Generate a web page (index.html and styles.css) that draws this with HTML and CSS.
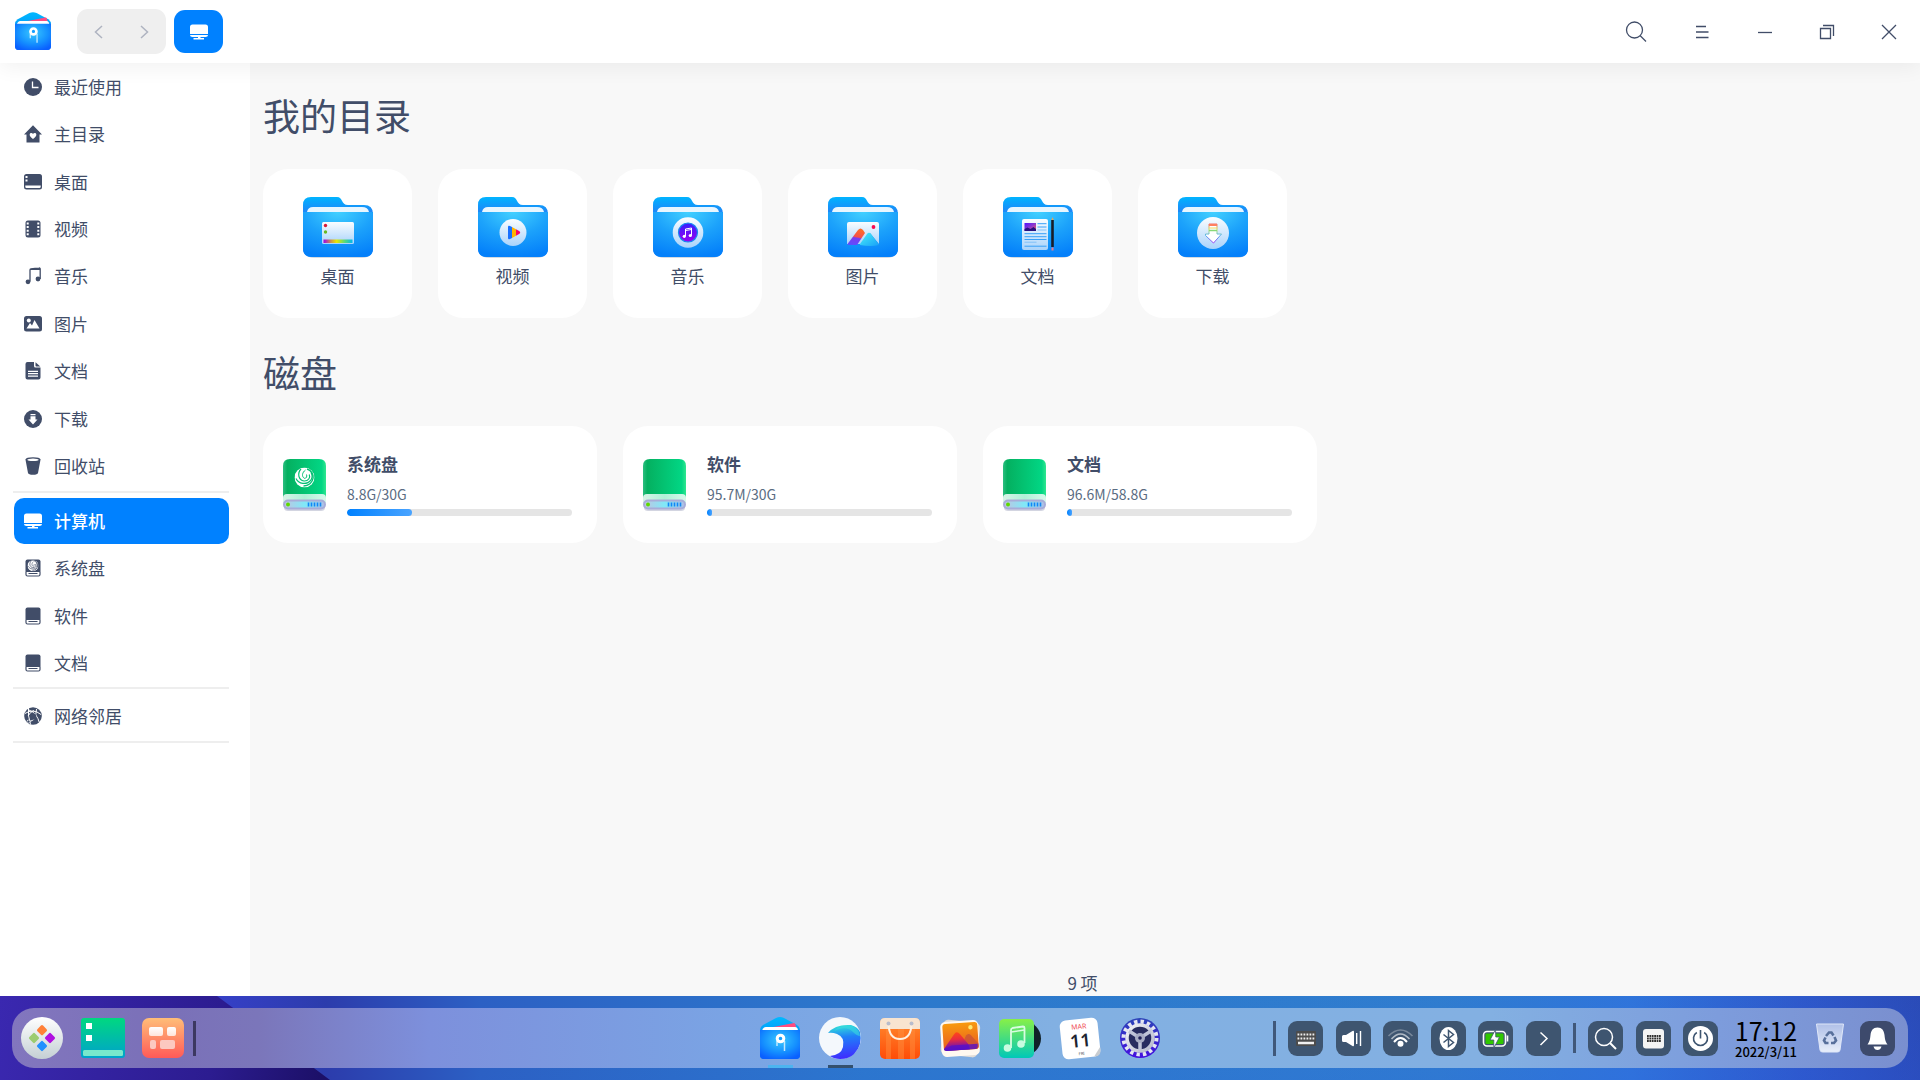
FILE: index.html
```html
<!DOCTYPE html>
<html lang="zh-CN">
<head>
<meta charset="utf-8">
<meta name="viewport" content="width=device-width, initial-scale=1">
<title>计算机</title>
<link rel="stylesheet" href="styles.css">
</head>
<body>
<svg class="sprite" width="0" height="0" aria-hidden="true">
  <defs>
    <linearGradient id="folderBack" x1="0" y1="0" x2="0" y2="1"><stop offset="0" stop-color="#00b4ff"/><stop offset=".25" stop-color="#1f86f8"/></linearGradient>
    <radialGradient id="folderFront" cx=".5" cy="0" r="1"><stop offset="0" stop-color="#42d0ff"/><stop offset=".5" stop-color="#1ca2fb"/><stop offset="1" stop-color="#0480fa"/></radialGradient>
    <linearGradient id="paper" x1="0" y1="0" x2="0" y2="1"><stop offset="0" stop-color="#fafdff"/><stop offset="1" stop-color="#a9d3fb"/></linearGradient>
    <linearGradient id="rainbow"><stop offset="0" stop-color="#a000e8"/><stop offset=".25" stop-color="#d0904a"/><stop offset=".45" stop-color="#e8e800"/><stop offset=".75" stop-color="#50d880"/><stop offset="1" stop-color="#00b8f0"/></linearGradient>
    <linearGradient id="violet" x1="0" y1="0" x2="0" y2="1"><stop offset="0" stop-color="#3420ff"/><stop offset="1" stop-color="#9b00f0"/></linearGradient>
    <linearGradient id="peakRed" x1=".2" y1="0" x2="0" y2="1"><stop offset="0" stop-color="#ff6a28"/><stop offset=".42" stop-color="#f4504c"/><stop offset=".5" stop-color="#7a3cf0"/><stop offset="1" stop-color="#5a50ff"/></linearGradient>
    <linearGradient id="peakCyan" x1="0" y1="0" x2="1" y2="1"><stop offset="0" stop-color="#48f0f8"/><stop offset="1" stop-color="#18a0f8"/></linearGradient>
    <linearGradient id="thumb" x1="0" y1="0" x2="1" y2="1"><stop offset="0" stop-color="#5010ff"/><stop offset=".5" stop-color="#8a3ad0"/><stop offset="1" stop-color="#ff6050"/></linearGradient>
    <linearGradient id="arrowEdge" x1="0" y1="0" x2="0" y2="1"><stop offset="0" stop-color="#f07070"/><stop offset=".3" stop-color="#c8e060"/><stop offset=".6" stop-color="#50b0f0"/><stop offset="1" stop-color="#a040f0"/></linearGradient>
    <linearGradient id="diskTop"><stop offset="0" stop-color="#2cbe80"/><stop offset=".1" stop-color="#04b060"/><stop offset=".9" stop-color="#02d684"/><stop offset="1" stop-color="#30e690"/></linearGradient>
    <linearGradient id="diskMid"><stop offset="0" stop-color="#d8f4e8"/><stop offset=".5" stop-color="#b0f0d8"/><stop offset="1" stop-color="#d8f8ec"/></linearGradient>
    <linearGradient id="diskBase"><stop offset="0" stop-color="#c0c4e0"/><stop offset=".5" stop-color="#80e8f8"/><stop offset="1" stop-color="#b0c0e4"/></linearGradient>
    <linearGradient id="fmBack" x1="0" y1="0" x2="0" y2="1"><stop offset="0" stop-color="#00b8ff"/><stop offset="1" stop-color="#0870f0"/></linearGradient>
    <radialGradient id="fmFront" cx=".5" cy=".35" r=".7"><stop offset="0" stop-color="#38c8ff"/><stop offset=".6" stop-color="#1590ff"/><stop offset="1" stop-color="#0a60ff"/></radialGradient>
    <linearGradient id="silver" x1="0" y1="0" x2="0" y2="1"><stop offset="0" stop-color="#ffffff"/><stop offset="1" stop-color="#c4d0d4"/></linearGradient>
    <linearGradient id="teal" x1="0" y1="0" x2="0" y2="1"><stop offset="0" stop-color="#00d880"/><stop offset="1" stop-color="#00a2cc"/></linearGradient>
    <linearGradient id="coral" x1="0" y1="0" x2="0" y2="1"><stop offset="0" stop-color="#ffbe78"/><stop offset="1" stop-color="#ff5a58"/></linearGradient>
    <linearGradient id="tile" x1="0" y1="0" x2="0" y2="1"><stop offset="0" stop-color="#fff"/><stop offset="1" stop-color="#ffe4da"/></linearGradient>
    <linearGradient id="wave" x1=".5" y1="0" x2=".6" y2="1"><stop offset="0" stop-color="#30e0d8"/><stop offset=".35" stop-color="#2080f8"/><stop offset="1" stop-color="#4028ff"/></linearGradient>
    <linearGradient id="bag" x1="0" y1="0" x2="0" y2="1"><stop offset="0" stop-color="#ff8c30"/><stop offset="1" stop-color="#ff4c08"/></linearGradient>
    <linearGradient id="sunset" x1="0" y1="0" x2="0" y2="1"><stop offset="0" stop-color="#f89a10"/><stop offset="1" stop-color="#e85a20"/></linearGradient>
    <linearGradient id="ridge" x1="0" y1="0" x2="0" y2="1"><stop offset="0" stop-color="#ff4818"/><stop offset=".4" stop-color="#e82c40"/><stop offset="1" stop-color="#4808d8"/></linearGradient>
    <linearGradient id="musicBox" x1="0" y1="0" x2="0" y2="1"><stop offset="0" stop-color="#88f048"/><stop offset="1" stop-color="#00c8b8"/></linearGradient>
    <linearGradient id="gearBack" x1="0" y1="0" x2="0" y2="1"><stop offset="0" stop-color="#2c44b8"/><stop offset="1" stop-color="#4410e0"/></linearGradient>
    <linearGradient id="gearRim" x1="0" y1="0" x2="1" y2="1"><stop offset="0" stop-color="#f4f4f8"/><stop offset="1" stop-color="#b4b8cc"/></linearGradient>
    <linearGradient id="bin" x1="0" y1="0" x2="0" y2="1"><stop offset="0" stop-color="#b0c0e8"/><stop offset="1" stop-color="#e8eefa"/></linearGradient>
  </defs>
  <symbol id="folder" viewBox="0 0 70 62">
    <path d="M3 56h64q-1 5-8 5H11q-7 0-8-5z" fill="#0a3060" opacity=".18"/>
    <path d="M0 8Q0 0 8 0H34C40 0 38 8 45 8H61Q70 8 70 17V51Q70 60 61 60H9Q0 60 0 51z" fill="url(#folderBack)"/>
    <path d="M4 15Q5 10 10 10H59Q65 10 66 15z" fill="#e8f6ff"/>
    <path d="M0 15H70V51Q70 60 61 60H9Q0 60 0 51z" fill="url(#folderFront)"/>
  </symbol>
  <symbol id="disk" viewBox="0 0 43 52">
    <rect x="1" y="45" width="41" height="7" rx="4" fill="#8088a8" opacity=".35"/>
    <path d="M0 42V7Q0 0 7 0H36Q43 0 43 7V42z" fill="url(#diskTop)"/>
    <path d="M0 44V39Q0 35 4 35H39Q43 35 43 39V44z" fill="url(#diskMid)"/>
    <rect x="1" y="41.500" width="41" height="8" rx="4" fill="url(#diskBase)" stroke="#a8acd8" stroke-width="2"/>
    <circle cx="5" cy="45.500" r="2" fill="#60d800"/>
    <path d="M25.500 43.500v4M28.500 43.500v4M31.500 43.500v4M34.500 43.500v4M37.500 43.500v4" stroke="#1088f8" stroke-width="1.600"/>
  </symbol>
  <symbol id="swirl" viewBox="0 0 20 20">
    <circle cx="10" cy="10" r="10" fill="#fff"/>
    <g class="swirl-gap" fill="none">
      <path d="M6.500 1.500C2.500 6 4 12.500 9.500 13.500C14 13.800 16 10 14.800 7" stroke-width="1.200"/>
      <path d="M11 2.500C7.500 5 7 9 9.800 10.800C12 11 12.800 9 12 7" stroke-width="1"/>
      <path d="M1.500 11C4 16.500 12 18 16.500 12.500C18 10 18 7.500 16.500 5" stroke-width="1.200"/>
      <path d="M12.500 1.500C16.500 3 18.800 6.500 18.600 10.500C18 15 14 18.500 9 18.500" stroke-width="1.400"/>
    </g>
  </symbol>
  <symbol id="filemanager" viewBox="0 0 40 42">
    <path d="M0 14Q0 10 3 8L16 1Q20-.8 24 1L37 8Q40 10 40 14V38Q40 42 36 42H4Q0 42 0 38z" fill="url(#fmBack)"/>
    <path d="M3 12L34 6Q36 6 36 12z" fill="#ff4c80"/>
    <path d="M2 14Q3 10 6 10H35Q38 10 38 14z" fill="#fff"/>
    <path d="M0 13H40V38Q40 42 36 42H4Q0 42 0 38z" fill="url(#fmFront)"/>
    <path d="M17 24v5M24.500 24v10" stroke="#bfe8ff" stroke-width="1.500"/>
    <circle cx="20.500" cy="21.500" r="3.300" fill="#18a0ff" stroke="#fff" stroke-width="3"/>
  </symbol>
  <symbol id="computer" viewBox="0 0 18 18">
    <path d="M2.500 1.500h13q2.500 0 2.500 2.500v7H0V4q0-2.500 2.500-2.500zM0 12h18q0 2-2.500 2h-5v1h3.500v1.500H3.500V15H8v-1H2.500Q0 14 0 12z" fill="currentColor"/>
  </symbol>
  <symbol id="drive" viewBox="0 0 18 18">
    <path d="M1.500 13V2.500Q1.500.5 3.500.5h11q2 0 2 2V13z" fill="currentColor"/>
    <path d="M2 13v2.500q0 1.500 1.500 1.500h11q1.500 0 1.500-1.500V13M4.500 14.500h9" fill="none" stroke="currentColor" stroke-width="1.200"/>
  </symbol>
</svg>

<header class="titlebar">
  <svg class="app-logo" aria-hidden="true"><use href="#filemanager"/></svg>
  <div class="history">
    <button type="button" aria-label="后退"><svg width="9" height="14" viewBox="0 0 9 14"><path d="M8 1L1.500 7L8 13"/></svg></button>
    <button type="button" aria-label="前进"><svg width="9" height="14" viewBox="0 0 9 14"><path d="M1 1L7.500 7L1 13"/></svg></button>
  </div>
  <button class="location" type="button" aria-label="计算机"><svg width="18" height="18"><use href="#computer"/></svg></button>
  <div class="window-tools">
    <button type="button" aria-label="搜索"><svg width="22" height="22" viewBox="0 0 22 22"><circle cx="9.500" cy="9" r="8"/><path d="M15 14.500L21 20.500"/></svg></button>
    <button type="button" aria-label="菜单"><svg width="14" height="14" viewBox="0 0 14 14"><path d="M0 1.500h10M0 7h12.500M0 12.500h12.500"/></svg></button>
    <button type="button" aria-label="最小化"><svg width="14" height="14" viewBox="0 0 14 14"><path d="M0 7.500h14"/></svg></button>
    <button type="button" aria-label="还原"><svg width="16" height="16" viewBox="0 0 16 16"><path d="M1.500 4.500h10v10h-10zM4 1.500h10.500V12"/></svg></button>
    <button type="button" aria-label="关闭"><svg width="16" height="16" viewBox="0 0 16 16"><path d="M1 1L15 15M15 1L1 15"/></svg></button>
  </div>
</header>

<div class="workspace">
  <nav class="sidebar" aria-label="位置">
    <ul class="places places-user">
      <li><a href="#recent"><svg viewBox="0 0 18 18"><circle cx="9" cy="9" r="9" fill="currentColor"/><path d="M8.500 3.500v6h6" fill="none" stroke="#fff" stroke-width="1.300"/></svg>最近使用</a></li>
      <li><a href="#home"><svg viewBox="0 0 18 18"><path d="M9 .3L18 9.500h-2.500V17.500h-13V9.500H0z" fill="currentColor"/><path d="M9 14C6 12 5.500 10.500 5.700 9.300C6 7.600 8.300 7.500 9 9C9.700 7.500 12 7.600 12.300 9.300C12.500 10.500 12 12 9 14z" fill="#fff"/></svg>主目录</a></li>
      <li><a href="#desktop"><svg viewBox="0 0 18 18"><rect x="0" y="1" width="18" height="15.500" rx="2.500" fill="currentColor"/><path d="M1.500 3h2v2h-2zM1.500 6.500h2v2h-2zM1.300 12.500h15.400v1.300q0 1.200-1.200 1.200h-13q-1.200 0-1.200-1.200z" fill="#fff"/></svg>桌面</a></li>
      <li><a href="#videos"><svg viewBox="0 0 18 18"><rect x="1.500" y=".5" width="15" height="17" rx="2.500" fill="currentColor"/><path d="M2.700 2.500h2v2h-2zM2.700 6h2v2h-2zM2.700 9.700h2v2h-2zM2.700 13.300h2v2h-2zM13.300 2.500h2v2h-2zM13.300 6h2v2h-2zM13.300 9.700h2v2h-2zM13.300 13.300h2v2h-2z" fill="#fff"/></svg>视频</a></li>
      <li><a href="#music"><svg viewBox="0 0 18 18"><path d="M6 14.500V3Q6 2 7 1.800L15 1q1.200-.2 1.200 1V12" fill="none" stroke="currentColor" stroke-width="1.300"/><path d="M6 2L16 1v2L6 3z" fill="currentColor"/><circle cx="4" cy="14.800" r="2.400" fill="currentColor"/><circle cx="14" cy="12" r="2.400" fill="currentColor"/></svg>音乐</a></li>
      <li><a href="#pictures"><svg viewBox="0 0 18 18"><rect x="0" y="1" width="18" height="15.500" rx="2.500" fill="currentColor"/><circle cx="4.800" cy="5.500" r="2" fill="#fff"/><path d="M2.500 13.500L6 8l2 2.500L10.500 5l5 8.500z" fill="#fff"/></svg>图片</a></li>
      <li><a href="#documents"><svg viewBox="0 0 18 18"><path d="M3.500 0H10v4q0 1.500 1.500 1.500h5V15.500q0 2-2 2h-11q-2 0-2-2V2Q1.500 0 3.500 0z" fill="currentColor"/><path d="M11.500.3L16.300 4.500h-4q-.8 0-.8-.8z" fill="currentColor"/><path d="M4 9.300h10M4 11.700h10M4 14.200h10" stroke="#fff" stroke-width="1.200"/></svg>文档</a></li>
      <li><a href="#downloads"><svg viewBox="0 0 18 18"><circle cx="9" cy="9" r="9" fill="currentColor"/><path d="M6.500 4h5v1.300h-5zM6.500 6.300h5V9.500h2L9 14.500L4.500 9.500h2z" fill="#fff"/></svg>下载</a></li>
      <li><a href="#trash"><svg viewBox="0 0 18 18"><path d="M1.500 2.500Q2 .2 9 .2T16.500 2.500L14 16q-.5 1.800-5 1.800T4 16z" fill="currentColor"/><ellipse cx="9" cy="2.800" rx="5.800" ry="1.300" fill="#fff"/></svg>回收站</a></li>
    </ul>
    <ul class="places places-disk">
      <li><a class="current" href="#computer-view" aria-current="page"><svg><use href="#computer"/></svg>计算机</a></li>
      <li><a href="#disk-system"><svg viewBox="0 0 18 18"><path d="M1.500 13V2.500Q1.500.5 3.500.5h11q2 0 2 2V13z" fill="currentColor"/><path d="M2 13v2.500q0 1.500 1.500 1.500h11q1.500 0 1.500-1.500V13M4.500 14.500h9" fill="none" stroke="currentColor" stroke-width="1.200"/><use href="#swirl" x="3.500" y="1.200" width="11" height="11"/></svg>系统盘</a></li>
      <li><a href="#disk-software"><svg><use href="#drive"/></svg>软件</a></li>
      <li><a href="#disk-documents"><svg><use href="#drive"/></svg>文档</a></li>
    </ul>
    <ul class="places places-network">
      <li><a href="#network"><svg viewBox="0 0 18 18"><circle cx="9" cy="9" r="8.800" fill="currentColor"/><path d="M4.500 0Q3.500 8 6.500 17.500M1 6.500Q9 1 17 7.500M3 13.500Q12 17 12.500 2M5 3Q13 6 15.500 16M4 9Q6 5 10 3.500" fill="none" stroke="#fff" stroke-width="1"/><circle cx="9" cy="9.500" r="3.200" fill="currentColor"/><circle cx="4.500" cy="14.500" r="1.500" fill="currentColor" stroke="#fff" stroke-width=".6"/></svg>网络邻居</a></li>
    </ul>
  </nav>

  <main class="content" id="computer-view">
    <section>
      <h2>我的目录</h2>
      <div class="folders">
        <a class="folder" href="#desktop"><svg viewBox="0 0 70 60"><use href="#folder" width="70" height="62"/><rect x="19" y="25" width="32" height="22" rx="1.500" fill="url(#paper)"/><rect x="20.500" y="42.500" width="29" height="3.500" fill="url(#rainbow)"/><circle cx="22.500" cy="28.500" r="1.700" fill="#d81838"/><circle cx="22.500" cy="35" r="1.700" fill="#6ab820"/></svg><span>桌面</span></a>
        <a class="folder" href="#videos"><svg viewBox="0 0 70 60"><use href="#folder" width="70" height="62"/><circle cx="35" cy="35.500" r="13.500" fill="url(#paper)"/><path d="M30 30q0-2 2-1l2 1v11l-2 1q-2 1-2-1z" fill="#1870ff"/><path d="M34 30l4 2.300v6.400L34 41z" fill="#ffb400"/><path d="M38 32.300l3.500 2q1.500 1.200 0 2.400l-3.500 2z" fill="#f80868"/></svg><span>视频</span></a>
        <a class="folder" href="#music"><svg viewBox="0 0 70 60"><use href="#folder" width="70" height="62"/><circle cx="35" cy="35.500" r="15.300" fill="url(#paper)"/><circle cx="35" cy="35.500" r="9.500" fill="url(#violet)" stroke="#1888f0" stroke-width="1.200"/><path d="M32.500 39v-7l6-1v7.500M32.500 33.500l6-1" fill="none" stroke="#fff" stroke-width="1"/><circle cx="31.300" cy="39.300" r="1.600" fill="#fff"/><circle cx="37.300" cy="38.500" r="1.600" fill="#fff"/></svg><span>音乐</span></a>
        <a class="folder" href="#pictures"><svg viewBox="0 0 70 60"><use href="#folder" width="70" height="62"/><path d="M19 27q0-2 2-2h28q2 0 2 2v20L42 36l-7 11H19z" fill="url(#paper)"/><path d="M32 47L39 37q2-2.500 4 0l8 11q-8 2-19 0z" fill="url(#peakCyan)"/><path d="M19.500 47L30 33q2.500-3 5 0l2 3L29 48H21q-2 0-1.500-1z" fill="url(#peakRed)"/><circle cx="45.500" cy="30" r="1.900" fill="#f80850"/></svg><span>图片</span></a>
        <a class="folder" href="#documents"><svg viewBox="0 0 70 60"><use href="#folder" width="70" height="62"/><rect x="19" y="22" width="26" height="31" rx="2" fill="url(#paper)"/><rect x="21.500" y="26" width="11.500" height="8" fill="url(#thumb)"/><path d="M21.500 34v-2l3-1.500 3 1.500 3-2 2.500 2v2z" fill="#281080"/><path d="M34.500 26.700h9M34.500 30h9M21.500 36.700h22M21.500 39.700h22M21.500 42.500h22M21.500 49.200h22" stroke="#38a0f8"/><path d="M34.500 33h9M21.500 45.200h12" stroke="#80c0f8"/><path d="M49.500 23v27" stroke="#181c28" stroke-width="2.600"/><path d="M48.300 23L49.500 20l1.300 3z" fill="#d8a860"/><path d="M49.500 50.500v3" stroke="#f07888" stroke-width="2"/></svg><span>文档</span></a>
        <a class="folder" href="#downloads"><svg viewBox="0 0 70 60"><use href="#folder" width="70" height="62"/><circle cx="35" cy="36" r="16" fill="url(#paper)"/><path d="M31 27h8v10h4.500L35.500 46L27.500 38.500V37H31z" fill="#fff" stroke="url(#arrowEdge)"/><path d="M31 28h8" stroke="#ff8060" stroke-width="2"/><path d="M31 31h8" stroke="#f0d860" stroke-width="1"/><path d="M31 33.500h8" stroke="#88d878" stroke-width="1.500"/></svg><span>下载</span></a>
      </div>
    </section>
    <section>
      <h2>磁盘</h2>
      <div class="disks">
        <a class="disk" href="#disk-system">
          <svg viewBox="0 0 43 52"><use href="#disk" width="43" height="52"/><use class="swirl-green" href="#swirl" x="11.500" y="8.500" width="20" height="20"/></svg>
          <div class="disk-info"><h3>系统盘</h3><p>8.8G/30G</p><div class="meter"><div style="width:29%"></div></div></div>
        </a>
        <a class="disk" href="#disk-software">
          <svg viewBox="0 0 43 52"><use href="#disk" width="43" height="52"/></svg>
          <div class="disk-info"><h3>软件</h3><p>95.7M/30G</p><div class="meter"><div style="width:2%"></div></div></div>
        </a>
        <a class="disk" href="#disk-documents">
          <svg viewBox="0 0 43 52"><use href="#disk" width="43" height="52"/></svg>
          <div class="disk-info"><h3>文档</h3><p>96.6M/58.8G</p><div class="meter"><div style="width:2%"></div></div></div>
        </a>
      </div>
    </section>
    <p class="status">9 项</p>
  </main>
</div>

<footer class="taskbar">
  <div class="dock">
    <div class="dock-start">
      <div class="launchers">
        <button type="button" aria-label="启动器"><svg viewBox="0 0 42 42"><circle cx="21" cy="21" r="21" fill="url(#silver)"/><g><rect x="17" y="9.200" width="8" height="8" rx="1.500" transform="rotate(45 21 13.200)" fill="#ff8038"/><rect x="9" y="17" width="8" height="8" rx="1.500" transform="rotate(45 13 21)" fill="#9ccc70"/><rect x="25" y="17" width="8" height="8" rx="1.500" transform="rotate(45 29 21)" fill="#b010e0"/><rect x="17" y="25" width="8" height="8" rx="1.500" transform="rotate(45 21 29)" fill="#2090ff"/></g></svg></button>
        <button type="button" aria-label="显示桌面"><svg viewBox="0 0 42 42"><rect y="1" width="44" height="40" rx="3" fill="url(#teal)"/><path d="M5 6h6v6H5zM5 18h6v6H5z" fill="#fff"/><rect x="2" y="33" width="40" height="6" rx="1.500" fill="#78e8cc"/></svg></button>
        <button type="button" aria-label="多任务视图"><svg viewBox="0 0 42 42"><rect x="1" y="1" width="42" height="40" rx="7" fill="url(#coral)"/><rect x="8" y="10" width="14" height="9" rx="2" fill="url(#tile)"/><rect x="26" y="10" width="9" height="9" rx="2" fill="url(#tile)"/><rect x="9" y="23" width="6" height="9" rx="2" fill="#fcc8c0"/><rect x="19" y="23" width="15" height="9" rx="2" fill="#fcc8c0"/></svg></button>
      </div>
      <span class="divider divider-tall"></span>
    </div>

    <div class="apps">
      <button class="running active" type="button" aria-label="文件管理器"><svg viewBox="-1 0 42 42"><use href="#filemanager" width="40" height="42"/></svg></button>
      <button class="running" type="button" aria-label="浏览器"><svg viewBox="0 0 42 42"><circle cx="21" cy="21" r="21" fill="#f4f8fc"/><path d="M9 16Q16 7 32 8Q39 10 41 15Q44 28 35 37Q30 42 21 42Q15 42 11 39Q22 38 24 30Q26 20 18 17Q13 15 9 16z" fill="url(#wave)"/><path d="M15 14Q27 8 34 15Q38 19 41 19Q40 12 33 9Q22 7 15 14z" fill="#38d8e0" opacity=".6"/></svg></button>
      <button type="button" aria-label="应用商店"><svg viewBox="0 0 42 42"><rect x="1" y="1" width="40" height="41" rx="5" fill="url(#bag)"/><path d="M7 12h5v30H7zM19 12h6v30h-6zM31 12h5v30h-5z" fill="#ff9040" opacity=".45"/><path d="M1 12V6Q1 1 6 1H36Q41 1 41 6V12z" fill="#f8e4d0"/><path d="M9.500 7Q10 22 21 22T32.500 7" fill="none" stroke="#fff0e0" stroke-width="2"/><circle cx="9.500" cy="6.500" r="2" fill="#b8bccc"/><circle cx="32.500" cy="6.500" r="2" fill="#b8bccc"/></svg></button>
      <button type="button" aria-label="相册"><svg viewBox="0 0 42 42"><rect x="3" y="4" width="37" height="35" rx="5" transform="rotate(6 21 21)" fill="#e0dcd8"/><rect x="2" y="4" width="38" height="35" rx="5" transform="rotate(-4 21 21)" fill="#fff8f0"/><g transform="rotate(-4 21 19)"><rect x="4" y="6" width="35" height="27" rx="3" fill="url(#sunset)"/><path d="M20 33L27 19q2.500-3 5 0l7 9v2q0 3-3 3z" fill="#c85038" opacity=".75"/><path d="M4 31L15 17q3-4 6 0l8 11 1 5H7q-3 0-3-2z" fill="url(#ridge)"/><path d="M5 31L12 28H38v2q0 3-3 3H8z" fill="#5810c8" opacity=".8"/><circle cx="32" cy="11" r="2.200" fill="#ffe870"/></g></svg></button>
      <button type="button" aria-label="音乐"><svg viewBox="0 0 42 42"><circle cx="25" cy="21.500" r="17" fill="#102028"/><rect x="0" y="2" width="35" height="39" rx="5" fill="url(#musicBox)"/><path d="M12 31V13q0-1.500 1.500-2L24 9.500q1.500 0 1.500 1.500V26" fill="none" stroke="#d8fce0" stroke-width="1.800"/><path d="M12 15l13.500-2" stroke="#d8fce0" stroke-width="1.500"/><circle cx="8.500" cy="31" r="3.800" fill="#c8fce0"/><circle cx="22" cy="27" r="3.800" fill="#c8fce0"/></svg></button>
      <button type="button" aria-label="日历"><svg viewBox="0 0 42 42"><g transform="rotate(-6 21 21)"><rect x="2" y="2" width="38" height="39" rx="6" fill="#fff"/><path d="M40 32L33 41h1q6 0 6-6z" fill="#c8ccd0"/><text class="cal-month" x="21" y="12">MAR</text><text class="cal-day" x="21" y="30">11</text><text class="cal-week" x="21" y="38">FRI</text></g></svg></button>
      <button type="button" aria-label="控制中心"><svg viewBox="0 0 42 42"><circle cx="21" cy="21" r="20" fill="url(#gearBack)"/><circle cx="21" cy="21" r="16.500" fill="none" stroke="#e4e6f2" stroke-width="4" stroke-dasharray="3.400 3.080"/><circle cx="21" cy="21" r="13" fill="#282c60" stroke="url(#gearRim)" stroke-width="3.500"/><path d="M21 22V35M21 21L10 14M21 21L32 14" stroke="#c0c4d8" stroke-width="3.500"/><circle cx="21" cy="21" r="5" fill="#a8acc4"/><circle cx="21" cy="21" r="1.800" fill="#202058"/></svg></button>
    </div>

    <div class="dock-end">
      <div class="tray">
        <span class="divider divider-tall"></span>
        <div class="tray-group tray-system">
          <button type="button" aria-label="输入法"><svg viewBox="0 0 35 35"><rect x="8" y="10" width="20" height="15" rx="1" fill="#4c4c4c"/><path d="M9.500 13.500h17M9.500 17.500h17" stroke="#eee" stroke-width="2" stroke-dasharray="1.800 1.200"/><path d="M10 22h16" stroke="#f0f0f0" stroke-width="2.500"/></svg></button>
          <button type="button" aria-label="音量"><svg viewBox="0 0 35 35"><path d="M6 15.500q0-1.500 1.500-1.500H10l6.500-4q1.500-.8 1.500 1V24q0 1.800-1.500 1L10 21H7.500Q6 21 6 19.500z" fill="#fff"/><path d="M20.700 12v11M24.500 10v15" stroke="#fff" stroke-width="1.400"/></svg></button>
          <button type="button" aria-label="无线网络"><svg viewBox="0 0 35 35"><g fill="none" stroke="#fff" stroke-width="1.600"><path d="M11 21Q17.500 13 24 21" stroke-width="2"/><path d="M8.500 18Q17.500 8 26.500 18" opacity=".6"/><path d="M5.500 15Q17.500 3 29.500 15" opacity=".3"/></g><circle cx="17.500" cy="22.800" r="3" fill="#fff"/></svg></button>
          <button type="button" aria-label="蓝牙"><svg viewBox="0 0 35 35"><ellipse cx="17.500" cy="17.500" rx="9" ry="11.500" fill="#fff"/><path d="M12.500 13.500L22.500 21.500L17.500 25.500V9.500L22.500 13.500L12.500 21.500" fill="none" stroke="#3e5570" stroke-width="1.500"/></svg></button>
          <button type="button" aria-label="电池"><svg viewBox="0 0 35 35"><rect x="5.500" y="10.500" width="22" height="14.500" rx="3.500" fill="none" stroke="#fff" stroke-width="1.600"/><rect x="7.500" y="12.500" width="18" height="10.500" rx="1" fill="#30c800"/><path d="M29.500 14.500v6" stroke="#fff" stroke-width="1.600"/><path d="M17.500 8.500L12 19h3.800v8L21.500 16h-3.700z" fill="#fff" stroke="#3e5570" stroke-width=".8"/></svg></button>
          <button type="button" aria-label="展开托盘"><svg viewBox="0 0 35 35"><path d="M14.500 11.500L21 17.500L14.500 24" fill="none" stroke="#fff" stroke-width="1.500"/></svg></button>
        </div>
        <span class="divider"></span>
        <div class="tray-group tray-tools">
          <button type="button" aria-label="全局搜索"><svg viewBox="0 0 35 35"><circle cx="16" cy="16" r="8.500" fill="none" stroke="#fff" stroke-width="1.500"/><path d="M22 22L28 28" stroke="#fff" stroke-width="2"/></svg></button>
          <button type="button" aria-label="屏幕键盘"><svg viewBox="0 0 35 35"><rect x="7" y="8" width="21" height="19.500" rx="3" fill="#f4f4f4"/><path d="M11 15h14M11 17.500h14M11 20h14" stroke="#303030" stroke-width="1.800" stroke-dasharray="1.800 .6"/></svg></button>
          <button type="button" aria-label="电源"><svg viewBox="0 0 35 35"><circle cx="17.500" cy="17.500" r="12.500" fill="#fff"/><path d="M13.800 11.500A7 7 0 1 0 21.200 11.500M17.500 9v8.500" fill="none" stroke="#3e5570" stroke-width="1.600"/></svg></button>
        </div>
      </div>
      <div class="clock"><time class="clock-time" datetime="17:12">17:12</time><time class="clock-date" datetime="2022-03-11">2022/3/11</time></div>
      <button class="bin" type="button" aria-label="回收站"><svg viewBox="0 0 28 30"><path d="M.5 1H27.500L24 27q-.3 2-2.500 2h-15q-2.200 0-2.500-2z" fill="url(#bin)" stroke="#dfe7f8"/><g fill="none" stroke="#58709c" stroke-width="2.600"><path d="M10 13L13 9.500H15.500L17.500 12.500M18.500 14L20 17.500L18 20H15M12.500 20H9.500L8 17.500L9.500 14.500"/></g></svg></button>
      <div class="tray-group"><button type="button" aria-label="通知"><svg viewBox="0 0 35 35"><path d="M17.500 6.500C22 6.500 24 9.500 24.500 14C25 19 25.500 20.500 27.500 23.500H7.500C9.500 20.500 10 19 10.500 14C11 9.500 13 6.500 17.500 6.500zM13.500 25.500h8Q20.500 29 17.500 29T13.500 25.500z" fill="#fff"/></svg></button></div>
    </div>
  </div>
</footer>
</body>
</html>
```
FILE: styles.css
```css
:root {
  --ink: #414d68;
  --accent: #0081ff;
  --surface: #ffffff;
  --canvas: #f8f8f8;
  --line: #eeeeee;
  --swirl-gap: #414d68;
}

* {
  box-sizing: border-box;
}

body {
  display: flex;
  flex-direction: column;
  min-height: 100vh;
  margin: 0;
  background: var(--canvas);
  color: var(--ink);
  font-family: "Noto Sans CJK SC", "Noto Sans", sans-serif;
  font-size: 17px;
  line-height: 26px;
}

.sprite {
  position: absolute;
}

h2,
h3,
p,
ul {
  margin: 0;
  padding: 0;
}

ul {
  list-style: none;
}

a {
  color: inherit;
  text-decoration: none;
}

svg {
  display: block;
}

button {
  display: flex;
  align-items: center;
  justify-content: center;
  padding: 0;
  border: 0;
  background: none;
  color: inherit;
  font: inherit;
}

/* Title bar */

.titlebar {
  position: relative;
  z-index: 1;
  display: flex;
  align-items: center;
  height: 63px;
  padding-left: 15px;
  background: var(--surface);
  box-shadow: 0 4px 20px rgba(0, 0, 0, 0.06);
}

.app-logo {
  width: 36px;
  height: 38px;
  margin: 0 26px 2px 0;
}

.history {
  display: flex;
  gap: 4px;
  width: 89px;
  height: 45px;
  margin-right: 8px;
  padding-right: 1px;
  border-radius: 11px;
  background: #efefef;
}

.history button {
  flex: 1;
}

.history svg {
  fill: none;
  stroke: #aeb3c0;
  stroke-width: 1.5;
}

.location {
  width: 49px;
  height: 43px;
  border-radius: 11px;
  background: var(--accent);
  color: #fff;
}

.window-tools {
  display: flex;
  align-self: stretch;
  margin-left: auto;
}

.window-tools button {
  width: 62px;
}

.window-tools button:first-child {
  width: 72px;
}

.window-tools svg {
  fill: none;
  stroke: var(--ink);
  stroke-width: 1.3;
}

/* Sidebar */

.workspace {
  display: flex;
  flex: 1;
}

.sidebar {
  flex: none;
  width: 250px;
  padding: 0 21px 0 13px;
  background: var(--surface);
}

.places {
  display: flex;
  flex-direction: column;
  border-bottom: 2px solid var(--line);
}

.places-user {
  min-height: 430px;
  padding-bottom: 1px;
}

.places-disk {
  min-height: 196px;
  padding-top: 4px;
}

.places-network {
  min-height: 54px;
  padding: 3px 0 1px;
}

.places li {
  display: flex;
  flex: 1;
  padding: 1px 0 1px 1px;
}

.places a {
  display: flex;
  flex: 1;
  align-items: center;
  gap: 12px;
  padding-left: 10px;
  border-radius: 10px;
}

.places svg {
  width: 18px;
  height: 18px;
}

.places .current {
  background: var(--accent);
  color: #fff;
  font-weight: 500;
}

.swirl-gap {
  stroke: var(--swirl-gap);
}

.swirl-green {
  --swirl-gap: #04c074;
}

/* Content */

.content {
  display: flex;
  flex: 1;
  flex-direction: column;
  gap: 27px;
  padding: 25px 18px 0 13px;
}

h2 {
  margin-bottom: 27px;
  font-size: 37px;
  font-weight: 400;
  line-height: 54px;
}

.folders,
.disks {
  display: flex;
  flex-wrap: wrap;
  gap: 26px;
}

.folder {
  display: flex;
  flex-direction: column;
  align-items: center;
  gap: 6px;
  width: 149px;
  padding: 28px 0 29px;
  border-radius: 25px;
  background: var(--surface);
}

.folder svg {
  width: 70px;
  height: 60px;
  overflow: visible;
}

.disk {
  display: flex;
  align-items: center;
  gap: 21px;
  width: 334px;
  padding: 25px 25px 27px 20px;
  border-radius: 25px;
  background: var(--surface);
}

.disk > svg {
  flex: none;
  width: 43px;
  height: 52px;
  margin-top: 3px;
}

.disk-info {
  flex: 1;
}

h3 {
  font-size: 17px;
  font-weight: 700;
}

.disk p {
  margin: 7px 0 5px;
  color: #5a6c82;
  font-size: 14px;
  line-height: 20px;
}

.meter {
  height: 7px;
  overflow: hidden;
  border-radius: 4px;
  background: #e5e5e5;
}

.meter div {
  height: 100%;
  border-radius: 4px;
  background: linear-gradient(90deg, #0081ff, #4aa4ff);
}

.status {
  margin-top: auto;
  text-align: center;
}

/* Taskbar */

.taskbar {
  position: relative;
  padding: 12px;
  background: linear-gradient(172deg, transparent 40%, rgba(44, 90, 235, 0.3)),
    linear-gradient(90deg, #3640c8 11%, #2c3cac 17%, #2c60c4 25%, #2c78cc 45%, #3080cc 75%, #3078d8 85%, #2e58c4 94%, #2a48ac 100%);
}

.taskbar::before {
  content: "";
  position: absolute;
  inset: 0;
  background: linear-gradient(100deg, #3a28b0, #2c1c90 220px, #1c1068 330px);
  clip-path: polygon(0 0, 217px 0, 330px 100%, 0 100%);
}

.dock {
  position: relative;
  display: grid;
  grid-template-columns: 1fr auto 1fr;
  align-items: center;
  height: 60px;
  border-radius: 22px;
  background: linear-gradient(90deg, #8276be 0%, #7a70b8 8%, #7b76ba 13%, #7d90dc 22%, #7aa4e4 38%, #82b0e2 55%, #83b0e2 78%, #7d9cdc 90%, #7a8fcf 100%);
}

.dock-start,
.dock-end,
.tray,
.apps,
.launchers {
  display: flex;
  align-items: center;
}

.dock-start {
  gap: 10px;
  padding-left: 9px;
}

.launchers {
  gap: 18px;
}

.launchers svg,
.apps svg {
  width: 42px;
  height: 42px;
  overflow: visible;
}

.divider {
  width: 3px;
  height: 30px;
  background: #40587a;
}

.divider-tall {
  height: 35px;
}

.dock-start .divider {
  background: #3c3860;
}

.apps {
  gap: 18px;
}

.apps button {
  position: relative;
}

.running::after {
  content: "";
  position: absolute;
  bottom: -9px;
  width: 25px;
  height: 3px;
  background: #34506e;
}

.running.active::after {
  background: #4cb4f0;
}

.cal-month,
.cal-day,
.cal-week {
  font-family: "Noto Sans", sans-serif;
  text-anchor: middle;
}

.cal-month {
  fill: #f05058;
  font-size: 7px;
}

.cal-day {
  fill: #1c2430;
  font-size: 18px;
  font-weight: 600;
}

.cal-week {
  fill: #404850;
  font-size: 4px;
}

.dock-end {
  gap: 16px;
  justify-content: flex-end;
  padding-right: 13px;
}

.tray {
  gap: 12px;
}

.tray-group {
  display: flex;
  justify-content: space-between;
}

.tray-system {
  width: 273px;
}

.tray-tools {
  width: 130px;
}

.tray-group button {
  width: 35px;
  height: 35px;
  border-radius: 9px;
  background: #3e5570;
}

.dock-end > .tray-group button {
  background: #3d4a6c;
}

.tray-group svg {
  width: 35px;
  height: 35px;
}

.bin svg {
  width: 28px;
  height: 30px;
}

.clock {
  display: flex;
  flex-direction: column;
  align-items: center;
  width: 66px;
  padding-right: 2px;
  color: #000;
}

.clock-time {
  font-size: 25px;
  line-height: 27px;
}

.clock-date {
  font-size: 13px;
  font-weight: 500;
  line-height: 16px;
}
```
